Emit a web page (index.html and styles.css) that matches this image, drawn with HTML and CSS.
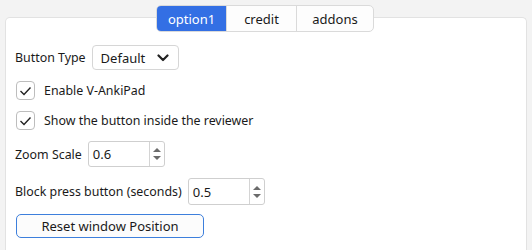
FILE: index.html
```html
<!DOCTYPE html>
<html>
<head>
<meta charset="utf-8">
<link rel="stylesheet" href="styles.css">
</head>
<body>
<div class="window">
  <div class="tabbar">
    <div class="tab active">option1</div>
    <div class="tab">credit</div>
    <div class="tab">addons</div>
  </div>
  <div class="panel">
    <div class="row row-type">
      <span class="label">Button Type</span>
      <div class="combo"><span>Default</span>
        <svg class="chev" width="12" height="8" viewBox="0 0 12 8"><path d="M1.5 1.5 L6 6 L10.5 1.5" fill="none" stroke="#222" stroke-width="2.2" stroke-linecap="round" stroke-linejoin="round"/></svg>
      </div>
    </div>
    <div class="row check-row">
      <span class="check"><svg width="13" height="10" viewBox="0 0 13 10"><path d="M1.5 5 L5 8.5 L11.5 1.5" fill="none" stroke="#222" stroke-width="1.4"/></svg></span>
      <span class="label">Enable V-AnkiPad</span>
    </div>
    <div class="row check-row">
      <span class="check"><svg width="13" height="10" viewBox="0 0 13 10"><path d="M1.5 5 L5 8.5 L11.5 1.5" fill="none" stroke="#222" stroke-width="1.4"/></svg></span>
      <span class="label">Show the button inside the reviewer</span>
    </div>
    <div class="row row-zoom">
      <span class="label">Zoom Scale</span>
      <div class="spin"><span class="val">0.6</span>
        <span class="arrows"><i class="up"></i><i class="down"></i></span>
      </div>
    </div>
    <div class="row row-block">
      <span class="label">Block press button (seconds)</span>
      <div class="spin"><span class="val">0.5</span>
        <span class="arrows"><i class="up"></i><i class="down"></i></span>
      </div>
    </div>
    <div class="row row-reset">
      <button class="reset">Reset window Position</button>
    </div>
  </div>
</div>
</body>
</html>
```
FILE: styles.css
```css
html, body { margin: 0; padding: 0; }
body {
  background: #f3f3f3;
  font-family: "Noto Sans", "Open Sans", sans-serif;
  font-size: 12.4px;
  color: #1a1a1a;
  width: 532px;
  height: 250px;
  overflow: hidden;
}
.window { padding: 5px 5px 0 5px; }
.tabbar {
  display: flex;
  width: max-content;
  margin-left: 151px;
  border: 1px solid #dadada;
  border-radius: 5px;
  background: #fdfdfd;
  position: relative;
  z-index: 1;
  height: 25px;
  overflow: hidden;
}
.tab {
  display: flex;
  align-items: center;
  justify-content: center;
  font-size: 13px;
  color: #1a1a1a;
  border-left: 1px solid #dadada;
}
.tab:nth-child(1) { width: 69px; border-left: none; }
.tab:nth-child(2) { width: 69px; }
.tab:nth-child(3) { width: 76px; }
.tab.active { background: #336fe4; color: #fff; }
.panel {
  margin-top: -15px;
  background: #fff;
  border: 1px solid #e2e2e2;
  border-bottom: none;
  border-radius: 5px 5px 0 0;
  height: 232px;
  padding: 0 0 0 9px;
}
.row { display: flex; align-items: center; }
.label { white-space: nowrap; }
.row-type { margin-top: 27px; height: 25px; }
.combo {
  margin-left: 6px;
  height: 23px;
  border: 1px solid #d6d6d6;
  border-radius: 4px;
  display: flex;
  align-items: center;
  justify-content: space-between;
  padding: 0 9px 0 8px;
  width: 68px;
  font-size: 13px;
}
.chev { margin-top: 1px; }
.check-row { height: 19px; }
.check-row:nth-of-type(2) { margin-top: 11px; }
.check-row:nth-of-type(3) { margin-top: 11px; }
.check {
  width: 17px;
  height: 17px;
  border: 1px solid #bdbdbd;
  border-radius: 4px;
  display: flex;
  align-items: center;
  justify-content: center;
  margin-left: 1px;
  margin-right: 9px;
  background: #fff;
}
.row-zoom { margin-top: 11px; height: 26px; }
.row-block { margin-top: 11px; height: 27px; }
.spin {
  margin-left: 6px;
  height: 24px;
  border: 1px solid #cfcfcf;
  border-radius: 3px;
  display: flex;
  width: 75px;
  font-size: 13px;
}
.row-block .spin { height: 25px; margin-left: 6px; }
.val { flex: 1; display: flex; align-items: center; padding-left: 4px; }
.arrows {
  width: 14px;
  border-left: 1px solid #d4d4d4;
  display: flex;
  flex-direction: column;
  align-items: center;
  justify-content: center;
  gap: 4px;
}
.arrows i { display: block; width: 0; height: 0; border-left: 4px solid transparent; border-right: 4px solid transparent; }
.arrows .up { border-bottom: 4px solid #6b6b6b; }
.arrows .down { border-top: 4px solid #6b6b6b; }
.row-reset { margin-top: 9px; }
.reset {
  margin-left: 1px;
  width: 188px;
  height: 24px;
  border: 1px solid #3d7fdc;
  border-radius: 5px;
  background: #fcfcfc;
  font-family: inherit;
  font-size: 13px;
  color: #1a1a1a;
  padding: 0;
}
```
